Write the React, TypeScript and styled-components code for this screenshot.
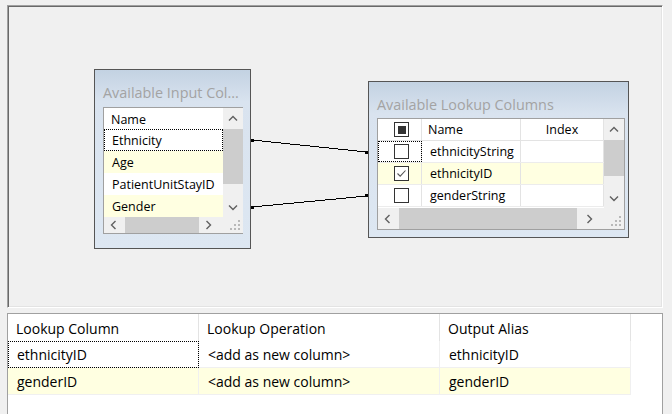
import React from 'react';
import styled, { createGlobalStyle } from 'styled-components';

const GlobalStyle = createGlobalStyle`
  html, body {
    margin: 0;
    padding: 0;
    background: #f0f0f0;
  }
  body {
    font-family: "Open Sans", "Noto Sans", sans-serif;
    color: #000;
  }
  * {
    box-sizing: border-box;
  }
`;

const Page = styled.div`
  width: 672px;
  height: 414px;
  overflow: hidden;
  display: flex;
  flex-direction: column;
  gap: 5px;
  padding: 5px 9px 0 7px;
`;

// design surface with sunken 3D edge
const Canvas = styled.div`
  position: relative;
  flex: 0 0 303px;
  background: #f0f0f0;
  border-top: 1px solid #a0a0a0;
  border-left: 1px solid #a0a0a0;
  border-right: 1px solid #fff;
  border-bottom: 1px solid #fff;
  box-shadow: inset 1px 1px 0 #696969, inset -1px -1px 0 #e3e3e3;
`;

const Wires = styled.svg`
  position: absolute;
  inset: 0;
  width: 100%;
  height: 100%;
  pointer-events: none;
`;

const Node = styled.div<{ $x: number; $y: number; $w: number; $h: number }>`
  position: absolute;
  left: ${({ $x }) => $x}px;
  top: ${({ $y }) => $y}px;
  width: ${({ $w }) => $w}px;
  height: ${({ $h }) => $h}px;
  border: 1px solid #555;
  background: linear-gradient(to bottom, #c3d2e2 0px, #d9e3ef 32px, #dde7f2 100%);
  display: flex;
  flex-direction: column;
  padding: 0 8px;
`;

const NodeTitle = styled.div<{ $h: number }>`
  height: ${({ $h }) => $h}px;
  padding-top: 12px;
  line-height: 22px;
  font-size: 14.4px;
  color: #a3a3a3;
  white-space: nowrap;
`;

const ListFrame = styled.div<{ $w: number; $h: number; $rows: string }>`
  width: ${({ $w }) => $w}px;
  height: ${({ $h }) => $h}px;
  border: 1px solid #a0a0a0;
  background: #fff;
  display: grid;
  grid-template-columns: 1fr 20px;
  grid-template-rows: ${({ $rows }) => $rows};
  font-size: 12.5px;
`;

const Rows = styled.div`
  overflow: hidden;
`;

const ListRow = styled.div<{ $yellow?: boolean; $focus?: boolean; $header?: boolean }>`
  height: ${({ $header }) => ($header ? 21 : 22)}px;
  display: flex;
  align-items: center;
  padding: 1px 0 0 ${({ $header }) => ($header ? 7 : 8)}px;
  background: ${({ $yellow }) => ($yellow ? '#ffffe1' : '#fff')};
  outline: ${({ $focus }) => ($focus ? '1px dotted #000' : 'none')};
  outline-offset: -1px;
  white-space: nowrap;
`;

const GridRow = styled.div<{ $yellow?: boolean; $header?: boolean }>`
  height: 22px;
  display: grid;
  grid-template-columns: 44px 99px 83px;
  background: ${({ $yellow }) => ($yellow ? '#ffffe1' : '#fff')};
  border-bottom: 1px solid ${({ $header }) => ($header ? '#e3e3e3' : '#ececec')};
`;

const GridCell = styled.div<{ $focus?: boolean; $center?: boolean; $pad?: number }>`
  display: flex;
  align-items: center;
  justify-content: ${({ $center }) => ($center ? 'center' : 'flex-start')};
  padding-left: ${({ $pad }) => $pad ?? 0}px;
  border-right: 1px solid #e3e3e3;
  outline: ${({ $focus }) => ($focus ? '1px dotted #000' : 'none')};
  outline-offset: -1px;
  white-space: nowrap;
`;

const CheckBox = styled.div`
  width: 15px;
  height: 15px;
  margin-left: 3px;
  border: 1px solid #333;
  background: #fff;
  display: flex;
  align-items: center;
  justify-content: center;
`;

const CheckFill = styled.div`
  width: 8px;
  height: 8px;
  background: #333;
`;

const VScroll = styled.div`
  background: #f0f0f0;
  display: flex;
  flex-direction: column;
`;

const HScroll = styled.div`
  background: #f0f0f0;
  display: flex;
  padding-right: 5px;
`;

const ArrowBtn = styled.div<{ $vertical?: boolean }>`
  flex: 0 0 ${({ $vertical }) => ($vertical ? 20 : 19)}px;
  display: flex;
  align-items: center;
  justify-content: center;
`;

const Thumb = styled.div<{ $offset: number; $size: number; $vertical?: boolean }>`
  background: #cdcdcd;
  flex: 0 0 ${({ $size }) => $size}px;
  ${({ $vertical, $offset }) => ($vertical ? `margin-top: ${$offset}px;` : `margin-left: ${$offset}px;`)}
`;

const Spacer = styled.div`
  flex: 1;
`;

const Corner = styled.div`
  background: #f0f0f0;
  display: flex;
  align-items: flex-end;
  justify-content: flex-end;
  padding: 0 3px 3px 0;
`;

const Table = styled.div`
  flex: 1;
  background: #fff;
  border: 1px solid #a0a0a0;
  border-bottom: none;
  display: grid;
  grid-template-columns: 191px 241px 191px;
  grid-auto-rows: 27px;
  align-content: start;
  font-size: 14px;
`;

const HeadCell = styled.div`
  height: 28px;
  display: flex;
  align-items: center;
  padding: 2px 0 0 8px;
  border-right: 1px solid #e3e3e3;
  border-bottom: 1px solid #e3e3e3;
`;

const DataCell = styled.div<{ $yellow?: boolean; $focus?: boolean }>`
  display: flex;
  align-items: center;
  padding: 1px 0 0 9px;
  background: ${({ $yellow }) => ($yellow ? '#ffffe1' : '#fff')};
  border-right: 1px solid #f0f0f0;
  border-bottom: 1px solid #f0f0f0;
  outline: ${({ $focus }) => ($focus ? '1px dotted #000' : 'none')};
  outline-offset: -1px;
`;

type Dir = 'up' | 'down' | 'left' | 'right';

const chevronPoints: Record<Dir, string> = {
  up: '1,5.5 5,1.5 9,5.5',
  down: '1,1.5 5,5.5 9,1.5',
  left: '5.5,1 1.5,5 5.5,9',
  right: '1.5,1 5.5,5 1.5,9',
};

function Chevron({ dir }: { dir: Dir }) {
  const vertical = dir === 'up' || dir === 'down';
  return (
    <svg width={vertical ? 10 : 7} height={vertical ? 7 : 10} viewBox={vertical ? '0 0 10 7' : '0 0 7 10'}>
      <polyline points={chevronPoints[dir]} fill="none" stroke="#606060" strokeWidth="1.4" />
    </svg>
  );
}

function Grip() {
  const dots = [[8, 0], [8, 4], [4, 4], [8, 8], [4, 8], [0, 8]];
  return (
    <svg width="10" height="10" viewBox="0 0 10 10">
      {dots.map(([x, y]) => <rect key={`${x}-${y}`} x={x} y={y} width="2" height="2" fill="#b8b8b8" />)}
    </svg>
  );
}

function Scrollbars({ vThumb, hThumb }: { vThumb: [number, number]; hThumb: [number, number] }) {
  return (
    <>
      <VScroll>
        <ArrowBtn $vertical><Chevron dir="up" /></ArrowBtn>
        <Thumb $vertical $offset={vThumb[0]} $size={vThumb[1]} />
        <Spacer />
        <ArrowBtn $vertical><Chevron dir="down" /></ArrowBtn>
      </VScroll>
      <HScroll>
        <ArrowBtn><Chevron dir="left" /></ArrowBtn>
        <Thumb $offset={hThumb[0]} $size={hThumb[1]} />
        <Spacer />
        <ArrowBtn><Chevron dir="right" /></ArrowBtn>
      </HScroll>
      <Corner><Grip /></Corner>
    </>
  );
}

const inputColumns = [
  { name: 'Ethnicity', focus: true },
  { name: 'Age', yellow: true },
  { name: 'PatientUnitStayID' },
  { name: 'Gender', yellow: true },
];

const lookupColumns = [
  { name: 'ethnicityString', checked: false, focus: true },
  { name: 'ethnicityID', checked: true, yellow: true },
  { name: 'genderString', checked: false },
];

const mappings = [
  { column: 'ethnicityID', op: '<add as new column>', alias: 'ethnicityID' },
  { column: 'genderID', op: '<add as new column>', alias: 'genderID', yellow: true },
];

function CheckMark() {
  return (
    <svg width="11" height="11" viewBox="0 0 11 11">
      <polyline points="1.5,5.5 4.2,8.2 9.5,2.5" fill="none" stroke="#555" strokeWidth="1.1" />
    </svg>
  );
}

export default function App() {
  return (
    <>
      <GlobalStyle />
      <Page>
        <Canvas>
          <Wires>
            <g shapeRendering="crispEdges">
              <line x1="244" y1="134" x2="359" y2="146" stroke="#000" strokeWidth="1" />
              <line x1="244" y1="201" x2="359" y2="190" stroke="#000" strokeWidth="1" />
              <rect x="243" y="133" width="3" height="3" fill="#000" />
              <rect x="357" y="145" width="3" height="3" fill="#000" />
              <rect x="243" y="200" width="3" height="3" fill="#000" />
              <rect x="357" y="188" width="3" height="3" fill="#000" />
            </g>
          </Wires>

          <Node $x={86} $y={63} $w={157} $h={180}>
            <NodeTitle $h={37}>Available Input Col...</NodeTitle>
            <ListFrame $w={140} $h={127} $rows="109px 16px">
              <Rows>
                <ListRow $header>Name</ListRow>
                {inputColumns.map((c) => (
                  <ListRow key={c.name} $yellow={c.yellow} $focus={c.focus}>{c.name}</ListRow>
                ))}
              </Rows>
              <Scrollbars vThumb={[1, 55]} hThumb={[2, 74]} />
            </ListFrame>
          </Node>

          <Node $x={360} $y={75} $w={261} $h={157}>
            <NodeTitle $h={36}>Available Lookup Columns</NodeTitle>
            <ListFrame $w={248} $h={112} $rows="89px 21px">
              <Rows>
                <GridRow $header>
                  <GridCell $pad={13}><CheckBox><CheckFill /></CheckBox></GridCell>
                  <GridCell $pad={6}>Name</GridCell>
                  <GridCell $center>Index</GridCell>
                </GridRow>
                {lookupColumns.map((c) => (
                  <GridRow key={c.name} $yellow={c.yellow}>
                    <GridCell $pad={13} $focus={c.focus}>
                      <CheckBox>{c.checked && <CheckMark />}</CheckBox>
                    </GridCell>
                    <GridCell $pad={8}>{c.name}</GridCell>
                    <GridCell />
                  </GridRow>
                ))}
              </Rows>
              <Scrollbars vThumb={[1, 36]} hThumb={[2, 178]} />
            </ListFrame>
          </Node>
        </Canvas>

        <Table>
          <HeadCell>Lookup Column</HeadCell>
          <HeadCell>Lookup Operation</HeadCell>
          <HeadCell>Output Alias</HeadCell>
          {mappings.map((m, i) => (
            <React.Fragment key={m.column}>
              <DataCell $yellow={m.yellow} $focus={i === 0}>{m.column}</DataCell>
              <DataCell $yellow={m.yellow}>{m.op}</DataCell>
              <DataCell $yellow={m.yellow}>{m.alias}</DataCell>
            </React.Fragment>
          ))}
        </Table>
      </Page>
    </>
  );
}
